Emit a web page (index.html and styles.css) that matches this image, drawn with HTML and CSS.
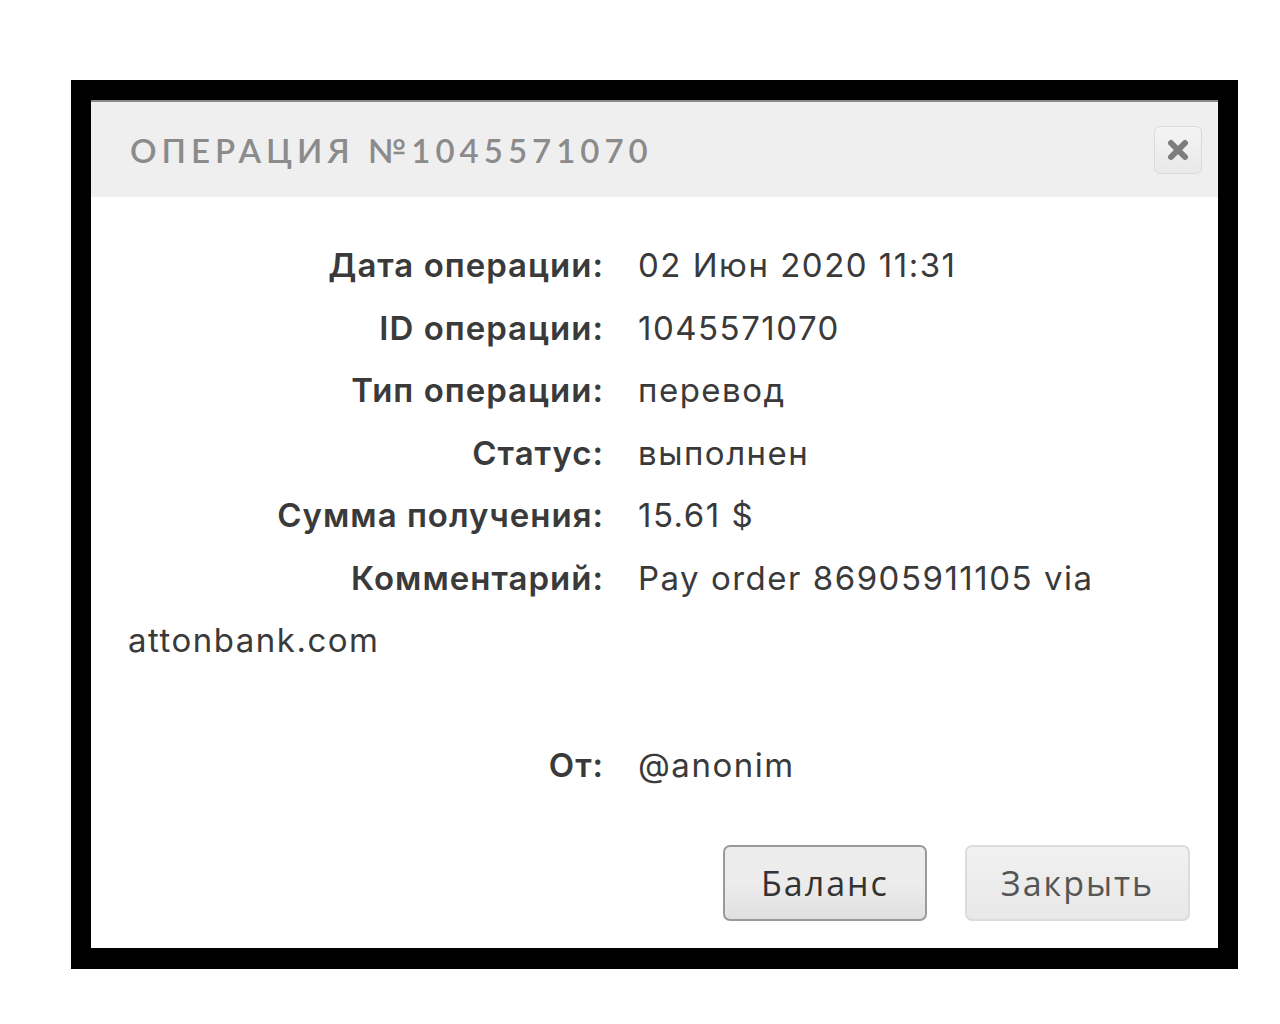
FILE: index.html
```html
<!DOCTYPE html>
<html lang="ru">
<head>
  <meta charset="UTF-8" />
  <title>Операция №1045571070</title>
  <link rel="stylesheet" href="styles.css">
</head>
<body>
  <div class="frame">
    <div class="modal">
      <div class="modal-head">
        <h1>Операция №1045571070</h1>
        <button class="close" title="Закрыть">
          <svg width="24" height="24" viewBox="0 0 24 24">
            <path d="M5 5 L19 19 M19 5 L5 19" stroke="#7d7d7d" stroke-width="6" stroke-linecap="round" fill="none" />
          </svg>
        </button>
      </div>

      <div class="modal-body">
        <div class="row"><span class="label">Дата операции:</span>02 Июн 2020 11:31</div>
        <div class="row"><span class="label">ID операции:</span>1045571070</div>
        <div class="row"><span class="label">Тип операции:</span>перевод</div>
        <div class="row"><span class="label">Статус:</span>выполнен</div>
        <div class="row"><span class="label">Сумма получения:</span>15.61 $</div>
        <div class="row"><span class="label">Комментарий:</span>Pay order 86905911105 via attonbank.com<br><br></div>
        <div class="row"><span class="label">От:</span>@anonim</div>
      </div>

      <div class="modal-foot">
        <button class="btn btn-main">Баланс</button>
        <button class="btn">Закрыть</button>
      </div>
    </div>
  </div>
</body>
</html>
```

FILE: styles.css
```css
body {
  margin: 0;
  background: #fff;
  font-family: Inter, "Open Sans", sans-serif;
}
.frame {
  width: 1127px;
  margin: 80px 0 0 71px;
  border: 20px solid #000;
  border-bottom-width: 21px;
}
.modal {
  background: #fff;
  height: 848px;
  display: flex;
  flex-direction: column;
  border-top: 2px solid #8a8a8a;
  box-sizing: border-box;
}
.modal-head {
  background: #efefef;
  height: 95px;
  display: flex;
  align-items: center;
  justify-content: space-between;
  padding: 0 16px 0 39px;
}
.modal-head h1 {
  margin: 0;
  font-family: Lato, sans-serif;
  font-weight: 600;
  font-size: 33px;
  letter-spacing: 5px;
  text-transform: uppercase;
  color: #8b8b8b;
}
.close {
  width: 48px;
  height: 48px;
  padding: 0;
  border: 1px solid #dadada;
  border-radius: 6px;
  background: linear-gradient(#f4f4f4, #e9e9e9);
  display: flex;
  align-items: center;
  justify-content: center;
}
.modal-body {
  padding: 37px 30px 0 37px;
  font-size: 33px;
  line-height: 62.5px;
  letter-spacing: 1.5px;
  color: #3a3a3a;
}
.label {
  display: inline-block;
  width: 476px;
  margin-right: 34px;
  text-align: right;
  font-weight: 600;
  letter-spacing: 1px;
}
.modal-foot {
  margin-top: auto;
  display: flex;
  justify-content: flex-end;
  gap: 38px;
  padding: 0 28px 27px 0;
}
.btn {
  height: 76px;
  padding: 0;
  font-family: "Open Sans", sans-serif;
  font-size: 34px;
  letter-spacing: 2px;
  color: #555;
  border: 2px solid #dcdcdc;
  border-radius: 7px;
  background: linear-gradient(#f1f1f1, #e8e8e8);
}
.btn-main {
  width: 204px;
  color: #333;
  border-color: #9a9a9a;
  background: linear-gradient(#ececec 50%, #e0e0e0);
}
.btn:last-child {
  width: 225px;
}
```
